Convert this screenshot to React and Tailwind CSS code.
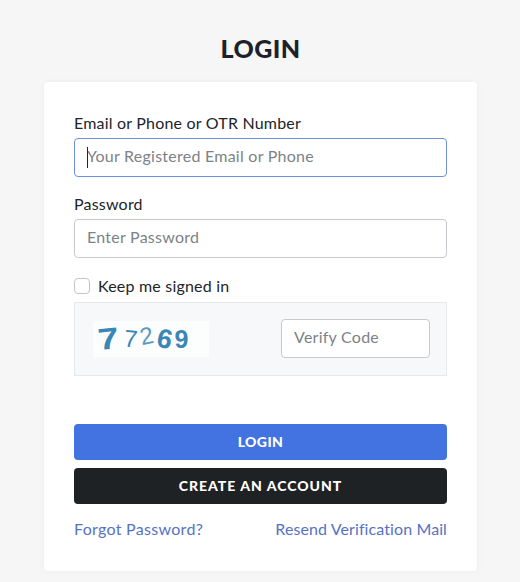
export default function App() {
  return (
    <div className="min-h-[582px] bg-[#f6f6f6] pr-[43px] pl-[44px] pt-[34px] font-['Lato','Noto_Sans',sans-serif] text-[#212529]">
      <h1 className="mb-[19px] text-center text-[25px] leading-[29px] font-black tracking-[0.4px] text-[#1d2129]">LOGIN</h1>

      <div className="h-[489px] rounded-[4px] bg-white px-[30px] pt-[29px] shadow-[0_0_6px_rgba(0,0,0,0.05)]">
        {/* Email */}
        <label className="mb-[3px] block text-[16px] leading-[24px] tracking-[0.2px]">Email or Phone or OTR Number</label>
        <div className="relative">
          <input
            placeholder="Your Registered Email or Phone"
            className="h-[39px] w-full rounded-[4px] border border-[#6f8fdc] bg-white px-[12px] pb-[5px] text-[16px] tracking-[0.25px] outline-none placeholder:text-[#7d8287]"
          />
          <span className="absolute top-[9px] left-[13px] h-[21px] w-px bg-[#212529]" />
        </div>

        {/* Password */}
        <label className="mt-[15px] mb-[3px] block text-[16px] leading-[24px] tracking-[0.2px]">Password</label>
        <input
          placeholder="Enter Password"
          className="h-[39px] w-full rounded-[4px] border border-[#c6cace] bg-white px-[12px] pb-[5px] text-[16px] tracking-[0.25px] outline-none placeholder:text-[#7d8287]"
        />

        {/* Keep signed in */}
        <div className="mt-[16px] flex h-[24px] items-center gap-[8px]">
          <span className="h-[16px] w-[16px] rounded-[4px] border border-[#c0c4c8] bg-white" />
          <span className="-mt-[1px] text-[16px] leading-[24px] tracking-[0.2px]">Keep me signed in</span>
        </div>

        {/* Captcha */}
        <div className="mt-[4px] flex h-[74px] items-center justify-between border border-[#e6e9ec] bg-[#f6f8fa] pr-[16px] pl-[18px]">
          <div className="flex h-[36px] w-[116px] items-center bg-[#fcfdfd] pl-[7px] font-['Liberation_Sans',sans-serif] leading-none font-bold text-[#3a86b5]">
            <span className="-rotate-6 scale-x-125 text-[30px]">7</span>
            <span className="ml-[7px] rotate-6 text-[24px] font-normal">7</span>
            <span className="ml-[3px] -mt-[6px] -rotate-12 text-[24px] font-normal text-[#5b9ac2]">2</span>
            <span className="ml-[4px] rotate-12 text-[27px]">6</span>
            <span className="ml-[2px] text-[25px]">9</span>
          </div>
          <input
            placeholder="Verify Code"
            className="mb-[2px] h-[39px] w-[149px] rounded-[4px] border border-[#c6cace] bg-white px-[12px] pb-[3px] text-[16px] tracking-[0.25px] outline-none placeholder:text-[#7d8287]"
          />
        </div>

        {/* Buttons */}
        <button className="mt-[48px] block h-[36px] w-full rounded-[4px] bg-[#4373e0] pb-[2px] text-[14px] font-black tracking-[0.4px] text-white">LOGIN</button>
        <button className="mt-[8px] block h-[36px] w-full rounded-[4px] bg-[#1f2224] pb-[2px] text-[14px] font-black tracking-[1px] text-white">CREATE AN ACCOUNT</button>

        <div className="mt-[13px] flex justify-between text-[16px] leading-[24px] text-[#5572c4]">
          <a className="tracking-[0.3px]">Forgot Password?</a>
          <a className="tracking-[0.1px]">Resend Verification Mail</a>
        </div>
      </div>
    </div>
  );
}
